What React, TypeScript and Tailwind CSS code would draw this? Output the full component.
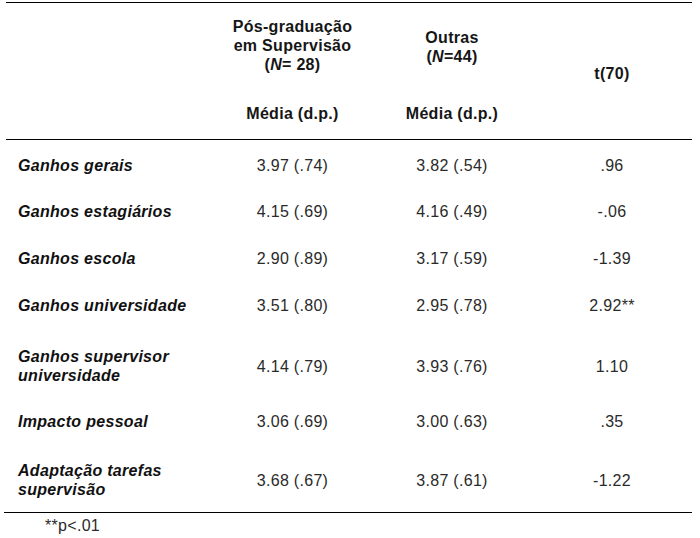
import React from 'react';

type Row = {
  label: string[];
  a: string;
  b: string;
  t: string;
  pt: string;
};

const rows: Row[] = [
  { label: ['Ganhos gerais'], a: '3.97 (.74)', b: '3.82 (.54)', t: '.96', pt: 'pt-[16px]' },
  { label: ['Ganhos estagiários'], a: '4.15 (.69)', b: '4.16 (.49)', t: '-.06', pt: 'pt-[27px]' },
  { label: ['Ganhos escola'], a: '2.90 (.89)', b: '3.17 (.59)', t: '-1.39', pt: 'pt-[28px]' },
  { label: ['Ganhos universidade'], a: '3.51 (.80)', b: '2.95 (.78)', t: '2.92**', pt: 'pt-[28px]' },
  { label: ['Ganhos supervisor', 'universidade'], a: '4.14 (.79)', b: '3.93 (.76)', t: '1.10', pt: 'pt-[32px]' },
  { label: ['Impacto pessoal'], a: '3.06 (.69)', b: '3.00 (.63)', t: '.35', pt: 'pt-[27px]' },
  { label: ['Adaptação tarefas', 'supervisão'], a: '3.68 (.67)', b: '3.87 (.61)', t: '-1.22', pt: 'pt-[30px]' },
];

const cols = 'grid grid-cols-[207px_159px_160px_160px]';

export default function App() {
  return (
    <div className="w-[700px] h-[538px] bg-white pl-[6px] pt-[2px] font-['Liberation_Sans',Arial,sans-serif] text-[16px] leading-[19px] tracking-[0.3px] text-[#111]">
      <div className="w-[686px] h-px bg-black" />

      {/* header */}
      <div className={`${cols} h-[101px] font-bold text-[#161616]`}>
        <div />
        <div className="pt-[14px] text-center">
          <div>Pós-graduação</div>
          <div>em Supervisão</div>
          <div>
            (<i>N</i>= 28)
          </div>
        </div>
        <div className="pt-[25px] text-center">
          <div>Outras</div>
          <div>
            (<i>N</i>=44)
          </div>
        </div>
        <div className="pt-[61px] text-center">t(70)</div>
      </div>
      <div className={`${cols} h-[35px] font-bold text-[#161616]`}>
        <div />
        <div className="text-center">Média (d.p.)</div>
        <div className="text-center">Média (d.p.)</div>
        <div />
      </div>
      <div className="w-[686px] h-px bg-black" />

      {/* body */}
      <div className="pb-[13px]">
        {rows.map((r) => (
          <div key={r.label.join(' ')} className={`${cols} items-center ${r.pt}`}>
            <div className="pl-[12px] font-bold italic text-[#111]">
              {r.label.map((l) => (
                <div key={l}>{l}</div>
              ))}
            </div>
            <div className="text-center text-[#2a2a2a]">{r.a}</div>
            <div className="text-center text-[#2a2a2a]">{r.b}</div>
            <div className="text-center text-[#2a2a2a]">{r.t}</div>
          </div>
        ))}
      </div>
      <div className="w-[688px] -ml-[2px] h-px bg-black" />
      <div className="pl-[39px] pt-[3px] text-[#2a2a2a]">**p&lt;.01</div>
    </div>
  );
}
